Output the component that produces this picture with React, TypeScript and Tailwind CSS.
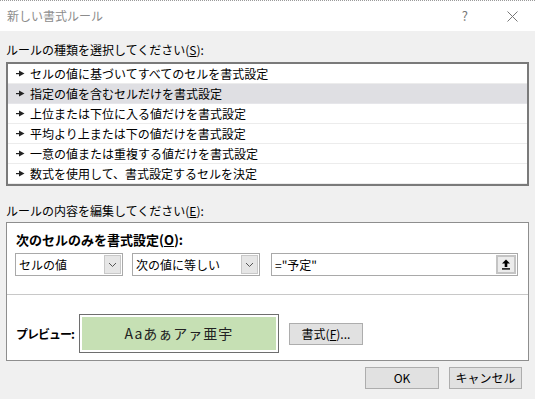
import React from "react";

const ruleTypes = [
  "セルの値に基づいてすべてのセルを書式設定",
  "指定の値を含むセルだけを書式設定",
  "上位または下位に入る値だけを書式設定",
  "平均より上または下の値だけを書式設定",
  "一意の値または重複する値だけを書式設定",
  "数式を使用して、書式設定するセルを決定",
];

function Pointer() {
  return (
    <svg width="9" height="7" viewBox="0 0 9 7" className="shrink-0">
      <rect x="0" y="3" width="4" height="1.2" fill="#222" />
      <path d="M3 0.5 L8.5 3.5 L3 6.5 Z" fill="#222" />
    </svg>
  );
}

function Chevron() {
  return (
    <svg width="9" height="6" viewBox="0 0 9 6">
      <path d="M1 1 L4.5 4.5 L8 1" fill="none" stroke="#555" strokeWidth="1" />
    </svg>
  );
}

function Combo({ label, width }: { label: string; width: string }) {
  return (
    <div className={`flex h-[23px] items-center border border-[#a9a9a9] bg-white ${width}`}>
      <span className="flex-1 pl-[3px] text-[12px] leading-none text-black">{label}</span>
      <div className="mr-[1px] flex h-[19px] w-[17px] items-center justify-center border border-[#c8c8c8] bg-[#e6e6e6]">
        <Chevron />
      </div>
    </div>
  );
}

function Button({ children, className = "" }: { children: React.ReactNode; className?: string }) {
  return (
    <div
      className={`flex h-[22px] items-center justify-center border border-[#adadad] bg-[#e1e1e1] text-[12px] text-black ${className}`}
    >
      {children}
    </div>
  );
}

export default function App() {
  return (
    <div
      className="flex h-[399px] w-[535px] flex-col overflow-hidden bg-[#f0f0f0] text-black"
      style={{ fontFamily: '"Noto Sans CJK JP", "Noto Sans", sans-serif' }}
    >
      {/* Title bar */}
      <div className="flex h-[31px] items-center border-t border-dotted border-[#9a9a9a] bg-white">
        <span className="pl-[7px] text-[12px] text-[#8c8c8c]">新しい書式ルール</span>
        <span className="ml-auto mr-[39px] text-[13px] text-[#777]">?</span>
        <svg width="11" height="11" viewBox="0 0 11 11" className="mr-[17px]">
          <path d="M0.5 0.5 L10.5 10.5 M10.5 0.5 L0.5 10.5" stroke="#777" strokeWidth="1" />
        </svg>
      </div>

      <div className="mt-[11px] pl-[6px] text-[12px] leading-[16px]">
        ルールの種類を選択してください(<span className="underline">S</span>):
      </div>

      {/* Rule type list */}
      <div className="mx-[6px] mt-[4px] h-[124px] border-2 border-[#7a7a7a] bg-white">
        {ruleTypes.map((t, i) => (
          <div
            key={t}
            className={`flex h-[20px] items-center gap-[5px] border-b pl-[8px] text-[12px] ${
              i === 1 ? "border-[#e6e6ea] bg-[#dfdfe3]" : "border-[#ececec]"
            }`}
          >
            <Pointer />
            <span>{t}</span>
          </div>
        ))}
      </div>

      <div className="mt-[17px] pl-[6px] text-[12px] leading-[16px]">
        ルールの内容を編集してください(<span className="underline">E</span>):
      </div>

      {/* Rule description */}
      <div className="mx-[6px] mt-[3px] h-[139px] border border-[#8e8e8e] bg-white">
        <div className="mt-[9px] pl-[9px] text-[13px] font-bold leading-[16px]">
          次のセルのみを書式設定(<span className="underline">O</span>):
        </div>
        <div className="mt-[5px] flex items-center pl-[8px]">
          <Combo label="セルの値" width="w-[108px]" />
          <Combo label="次の値に等しい" width="ml-[9px] w-[128px]" />
          <div className="ml-[11px] flex h-[23px] w-[247px] items-center border border-[#a9a9a9] bg-white">
            <span className="flex-1 pl-[3px] text-[12px]">="予定"</span>
            <div className="mr-[1px] flex h-[19px] w-[20px] items-center justify-center border-2 border-[#c4c4c4] bg-[#ececec]">
              <svg width="10" height="11" viewBox="0 0 10 11">
                <path d="M5 0.5 L9 4.5 L6.3 4.5 L6.3 8 L3.7 8 L3.7 4.5 L1 4.5 Z" fill="#000" />
                <rect x="1" y="9.2" width="8" height="1.4" fill="#000" />
              </svg>
            </div>
          </div>
        </div>
        <div className="mt-[18px] border-t border-[#c8c8c8]" />
        <div className="mt-[19px] flex items-center pl-[9px]">
          <span className="w-[63px] whitespace-nowrap text-[12px] font-bold tracking-[-1px]">プレビュー:</span>
          <div className="flex h-[39px] w-[200px] border border-[#6e6e6e] bg-white p-[2px]">
            <div className="flex flex-1 items-center justify-center bg-[#c6e0b4] text-[14px] tracking-[1px] text-[#222]">
              Aaあぁアァ亜宇
            </div>
          </div>
          <Button className="ml-[10px] w-[74px]">
            書式(<span className="underline">F</span>)...
          </Button>
        </div>
      </div>

      {/* Footer */}
      <div className="mt-[6px] flex justify-end pr-[13px]">
        <Button className="w-[74px]">OK</Button>
        <Button className="ml-[10px] w-[73px]">キャンセル</Button>
      </div>
    </div>
  );
}
